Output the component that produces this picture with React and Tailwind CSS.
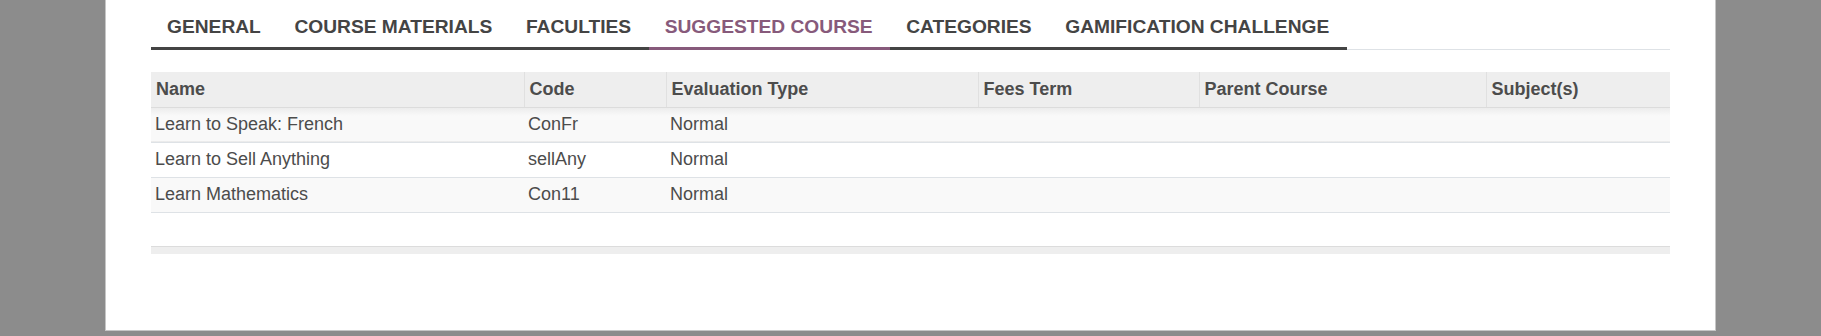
import React from 'react';

const tabs = [
    { label: 'General' },
    { label: 'Course Materials' },
    { label: 'Faculties' },
    { label: 'Suggested Course', active: true },
    { label: 'Categories' },
    { label: 'Gamification Challenge' },
];

const columns = [
    { label: 'Name', width: 'w-[373px]' },
    { label: 'Code', width: 'w-[142px]' },
    { label: 'Evaluation Type', width: 'w-[312px]' },
    { label: 'Fees Term', width: 'w-[221px]' },
    { label: 'Parent Course', width: 'w-[287px]' },
    { label: 'Subject(s)', width: 'w-[184px]' },
];

const courses = [
    { name: 'Learn to Speak: French', code: 'ConFr', evaluation: 'Normal' },
    { name: 'Learn to Sell Anything', code: 'sellAny', evaluation: 'Normal' },
    { name: 'Learn Mathematics', code: 'Con11', evaluation: 'Normal' },
];

const App = () => {
    return (
        <div className="h-[336px] w-[1821px] bg-[#8c8c8c] overflow-hidden font-['Liberation_Sans',_Arial,_sans-serif] text-[#4c4c4c]">
            <div className="ml-[105px] w-[1611px] h-[331px] bg-white border-x border-b border-[#c6c6c6] px-[45px]">
                {/* Notebook tabs */}
                <ul className="flex border-b border-[#dee2e6]">
                    {tabs.map((tab) => (
                        <li
                            key={tab.label}
                            className={`-mb-px pl-4 pr-[17.6px] pt-[13px] pb-[7px] text-[19.2px] leading-[27px] font-bold uppercase border-b-[3px] ${tab.active ? 'text-[#875a7b] border-[#875a7b]' : 'text-[#444] border-[#444]'}`}
                        >
                            {tab.label}
                        </li>
                    ))}
                </ul>

                {/* Suggested courses list */}
                <table className="mt-[22px] w-full table-fixed border-collapse text-[18px]">
                    <colgroup>
                        {columns.map((col) => (
                            <col key={col.label} className={col.width} />
                        ))}
                    </colgroup>
                    <thead>
                        <tr className="bg-[#eeeeee]">
                            {columns.map((col, i) => (
                                <th
                                    key={col.label}
                                    className={`h-[35px] px-[5px] text-left font-bold align-middle border-b border-[#dcdcdc] ${i > 0 ? 'border-l border-l-[#e0e0e0]' : ''}`}
                                >
                                    {col.label}
                                </th>
                            ))}
                        </tr>
                    </thead>
                    <tbody>
                        {courses.map((c, i) => (
                            <tr
                                key={c.code}
                                className={`border-b border-[#dee2e6] ${i === 0 ? 'bg-[linear-gradient(to_bottom,#ebebeb,#f9f9f9_9px)]' : i % 2 === 0 ? 'bg-[#f9f9f9]' : 'bg-white'}`}
                            >
                                <td className="h-[35px] px-[4px]">{c.name}</td>
                                <td className="h-[35px] px-[4px]">{c.code}</td>
                                <td className="h-[35px] px-[4px]">{c.evaluation}</td>
                                <td className="h-[35px] px-[4px]"></td>
                                <td className="h-[35px] px-[4px]"></td>
                                <td className="h-[35px] px-[4px]"></td>
                            </tr>
                        ))}
                        <tr>
                            <td colSpan={6} className="h-[34px]"></td>
                        </tr>
                    </tbody>
                    <tfoot>
                        <tr className="bg-[#eeeeee] border-t border-[#dcdcdc]">
                            <td colSpan={6} className="h-[8px] p-0"></td>
                        </tr>
                    </tfoot>
                </table>
            </div>
        </div>
    );
};

export default App;
